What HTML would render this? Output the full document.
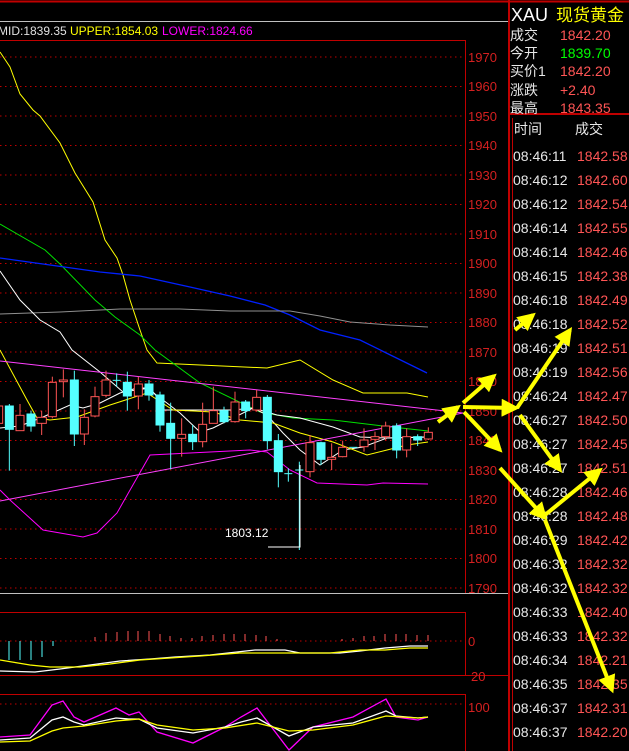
<!DOCTYPE html>
<html><head><meta charset="utf-8"><style>
html,body{margin:0;padding:0;background:#000;width:629px;height:751px;overflow:hidden}
svg{display:block}
text{font-family:"Liberation Sans","Noto Sans CJK SC",sans-serif}
</style></head><body>
<svg width="629" height="751" viewBox="0 0 629 751" xmlns="http://www.w3.org/2000/svg">
<rect width="629" height="751" fill="#000"/>
<line x1="0" y1="1.5" x2="629" y2="1.5" stroke="#c00000" stroke-width="2"/>
<line x1="0" y1="21.5" x2="509" y2="21.5" stroke="#c0c0c0"/>
<text x="-2" y="35" font-size="12" fill="#e0e0e0">MID:1839.35</text>
<text x="70" y="35" font-size="12" fill="#ffff00">UPPER:1854.03</text>
<text x="162" y="35" font-size="12" fill="#ff00ff">LOWER:1824.66</text>
<polyline points="0,40.5 465.5,40.5 465.5,593" fill="none" stroke="#c00000"/>
<line x1="0" y1="593.5" x2="509" y2="593.5" stroke="#c0c0c0"/>
<g stroke="#c00000" stroke-dasharray="1.5,3.5" stroke-width="1">
<line x1="0" y1="57" x2="465" y2="57"/><line x1="0" y1="86.5" x2="465" y2="86.5"/>
<line x1="0" y1="116" x2="465" y2="116"/><line x1="0" y1="145.5" x2="465" y2="145.5"/>
<line x1="0" y1="175" x2="465" y2="175"/><line x1="0" y1="204.5" x2="465" y2="204.5"/>
<line x1="0" y1="234" x2="465" y2="234"/><line x1="0" y1="263.5" x2="465" y2="263.5"/>
<line x1="0" y1="293" x2="465" y2="293"/><line x1="0" y1="322.5" x2="465" y2="322.5"/>
<line x1="0" y1="352" x2="465" y2="352"/><line x1="0" y1="381.5" x2="465" y2="381.5"/>
<line x1="0" y1="411" x2="465" y2="411"/><line x1="0" y1="440.5" x2="465" y2="440.5"/>
<line x1="0" y1="470" x2="465" y2="470"/><line x1="0" y1="499.5" x2="465" y2="499.5"/>
<line x1="0" y1="529" x2="465" y2="529"/><line x1="0" y1="558.5" x2="465" y2="558.5"/>
<line x1="0" y1="588" x2="465" y2="588"/>
</g>
<g font-size="13" fill="#d42020">
<text x="468" y="62">1970</text><text x="468" y="91">1960</text><text x="468" y="121">1950</text>
<text x="468" y="150">1940</text><text x="468" y="180">1930</text><text x="468" y="209">1920</text>
<text x="468" y="239">1910</text><text x="468" y="268">1900</text><text x="468" y="298">1890</text>
<text x="468" y="327">1880</text><text x="468" y="357">1870</text><text x="468" y="386">1860</text>
<text x="468" y="416">1850</text><text x="468" y="445">1840</text><text x="468" y="475">1830</text>
<text x="468" y="504">1820</text><text x="468" y="534">1810</text><text x="468" y="563">1800</text>
<text x="468" y="593">1790</text>
</g>
<g fill="none" stroke-width="1">
<polyline stroke="#ffff00" points="0,52 10,67 20,94 33,110 40,116 60,143 75,173 93,202 105,240 117,258 123,275 130,300 140,330 147,350 157,363 267,368 300,360 333,380 363,393 407,393 428,397"/>
<polyline stroke="#00e000" points="0,224 45,250 60,264 95,300 115,317 140,335 155,350 200,383 260,412 293,418 333,420 383,426 428,431"/>
<polyline stroke="#0020ff" stroke-width="1.3" points="0,258 50,265 100,272 140,276 190,287 230,296 265,305 290,315 320,330 360,340 427,373"/>
<polyline stroke="#909090" points="0,314 60,312 120,309 180,309 230,311 290,311 320,316 350,322 390,325 428,327"/>
<polyline stroke="#ffffff" points="0,271 20,300 40,320 60,332 72,350 100,372 123,392 150,388 157,397 163,410 233,410 253,408 277,415 300,418 333,427 360,437 387,438 428,437"/>
<polyline stroke="#ffffff" points="0,428 20,426 43,417 70,405 83,408 100,403 120,393 137,388 147,388 163,400 180,413 200,432 213,428 233,418 253,408 267,415 283,433 300,450 320,465 343,450 363,447 387,438 428,437"/>
<polyline stroke="#ffff00" points="0,350 27,400 37,418 50,420 77,417 110,405 147,393 173,410 213,412 240,420 273,423 300,433 333,442 367,455 387,450 407,445 428,442"/>
<line stroke="#ff40ff" x1="0" y1="361" x2="463" y2="413"/>
<line stroke="#ff40ff" x1="0" y1="501" x2="463" y2="413"/>
<polyline stroke="#ff00ff" points="0,490 10,500 43,530 83,537 97,533 117,513 150,455 250,450 267,452 290,470 317,483 367,485 383,483 428,484"/>
</g>
<g transform="translate(0,340) scale(0.33333)" stroke-width="3">
<g stroke="#ff5555" fill="#000">
<rect x="-10" y="198" width="18" height="52"/>
<line x1="60" y1="192" x2="60" y2="226"/><rect x="48" y="226" width="24" height="46"/>
<line x1="125" y1="212" x2="125" y2="285"/><rect x="111" y="232" width="28" height="18"/>
<line x1="157" y1="110" x2="157" y2="235"/><rect x="145" y="127" width="24" height="103"/>
<line x1="190" y1="88" x2="190" y2="172"/><rect x="178" y="120" width="24" height="5"/>
<line x1="253" y1="208" x2="253" y2="315"/><rect x="241" y="232" width="24" height="50"/>
<line x1="285" y1="140" x2="285" y2="232"/><rect x="273" y="170" width="24" height="58"/>
<line x1="318" y1="92" x2="318" y2="172"/><rect x="306" y="120" width="24" height="46"/>
<line x1="415" y1="110" x2="415" y2="208"/><rect x="403" y="132" width="24" height="36"/>
<line x1="545" y1="235" x2="545" y2="350"/><rect x="533" y="283" width="24" height="12"/>
<line x1="608" y1="188" x2="608" y2="322"/><rect x="596" y="253" width="24" height="52"/>
<line x1="640" y1="140" x2="640" y2="250"/><rect x="628" y="212" width="24" height="38"/>
<line x1="705" y1="155" x2="705" y2="248"/><rect x="693" y="186" width="24" height="59"/>
<line x1="770" y1="150" x2="770" y2="215"/><rect x="758" y="172" width="24" height="38"/>
<line x1="930" y1="285" x2="930" y2="412"/><rect x="918" y="308" width="24" height="87"/>
<line x1="995" y1="310" x2="995" y2="390"/><rect x="983" y="352" width="24" height="6"/>
<line x1="1028" y1="302" x2="1028" y2="352"/><rect x="1016" y="322" width="24" height="28"/>
<line x1="1092" y1="265" x2="1092" y2="335"/><rect x="1080" y="300" width="24" height="20"/>
<line x1="1125" y1="275" x2="1125" y2="330"/><rect x="1113" y="290" width="24" height="8"/>
<line x1="1157" y1="245" x2="1157" y2="300"/><rect x="1145" y="258" width="24" height="32"/>
<line x1="1220" y1="265" x2="1220" y2="352"/><rect x="1208" y="290" width="24" height="40"/>
<line x1="1285" y1="262" x2="1285" y2="300"/><rect x="1273" y="277" width="24" height="20"/>
</g>
<g stroke="#55ffff" fill="#55ffff">
<line x1="28" y1="192" x2="28" y2="392"/><rect x="16" y="198" width="24" height="70"/>
<line x1="93" y1="212" x2="93" y2="275"/><rect x="81" y="222" width="24" height="36"/>
<line x1="223" y1="92" x2="223" y2="318"/><rect x="211" y="120" width="24" height="162"/>
<line x1="350" y1="100" x2="350" y2="140"/><line x1="338" y1="121" x2="362" y2="121"/>
<line x1="382" y1="95" x2="382" y2="212"/><rect x="370" y="127" width="24" height="41"/>
<line x1="447" y1="120" x2="447" y2="182"/><rect x="435" y="132" width="24" height="33"/>
<line x1="480" y1="155" x2="480" y2="275"/><rect x="468" y="165" width="24" height="90"/>
<line x1="512" y1="188" x2="512" y2="388"/><rect x="500" y="250" width="24" height="45"/>
<line x1="578" y1="255" x2="578" y2="330"/><rect x="566" y="283" width="24" height="22"/>
<line x1="672" y1="200" x2="672" y2="250"/><rect x="660" y="212" width="24" height="33"/>
<line x1="737" y1="180" x2="737" y2="235"/><rect x="725" y="186" width="24" height="26"/>
<line x1="802" y1="165" x2="802" y2="328"/><rect x="790" y="172" width="24" height="130"/>
<line x1="835" y1="282" x2="835" y2="442"/><rect x="823" y="302" width="24" height="93"/>
<line x1="865" y1="385" x2="865" y2="425"/><line x1="853" y1="401" x2="877" y2="401"/>
<line x1="898" y1="365" x2="898" y2="630"/><line x1="886" y1="390" x2="910" y2="390"/>
<line x1="963" y1="305" x2="963" y2="375"/><rect x="951" y="308" width="24" height="50"/>
<line x1="1048" y1="322" x2="1072" y2="322"/>
<line x1="1190" y1="250" x2="1190" y2="355"/><rect x="1178" y="258" width="24" height="72"/>
<line x1="1253" y1="283" x2="1253" y2="318"/><rect x="1241" y="290" width="24" height="10"/>
</g>
</g>
<polyline points="268,547 300,547 300,465" fill="none" stroke="#ffffff"/>
<text x="225" y="537" font-size="12" fill="#ffffff">1803.12</text>
<polyline points="0,612.5 465.5,612.5 465.5,675" fill="none" stroke="#c00000"/>
<line x1="0" y1="675.5" x2="509" y2="675.5" stroke="#c00000"/>
<line x1="0" y1="641" x2="465" y2="641" stroke="#c00000" stroke-dasharray="1.5,3.5"/>
<text x="468" y="646" font-size="13" fill="#d42020">0</text>
<text x="471" y="681" font-size="13" fill="#d42020">20</text>
<g stroke="#55ffff"><line x1="9" y1="641" x2="9" y2="660"/><line x1="20" y1="641" x2="20" y2="660"/><line x1="31" y1="641" x2="31" y2="660"/><line x1="42" y1="641" x2="42" y2="657"/><line x1="53" y1="641" x2="53" y2="646"/></g>
<g stroke="#ff5555">
<line x1="95" y1="641" x2="95" y2="637"/><line x1="106" y1="641" x2="106" y2="633"/><line x1="117" y1="641" x2="117" y2="632"/><line x1="128" y1="641" x2="128" y2="631"/><line x1="138" y1="641" x2="138" y2="631"/><line x1="149" y1="641" x2="149" y2="631"/><line x1="160" y1="641" x2="160" y2="634"/><line x1="170" y1="641" x2="170" y2="636"/><line x1="181" y1="641" x2="181" y2="638"/><line x1="192" y1="641" x2="192" y2="638"/><line x1="202" y1="641" x2="202" y2="636"/><line x1="213" y1="641" x2="213" y2="635"/><line x1="224" y1="641" x2="224" y2="634"/><line x1="234" y1="641" x2="234" y2="634"/><line x1="245" y1="641" x2="245" y2="634"/><line x1="256" y1="641" x2="256" y2="635"/><line x1="266" y1="641" x2="266" y2="636"/><line x1="277" y1="641" x2="277" y2="639"/><line x1="342" y1="641" x2="342" y2="639"/><line x1="353" y1="641" x2="353" y2="638"/><line x1="364" y1="641" x2="364" y2="636"/><line x1="374" y1="641" x2="374" y2="636"/><line x1="385" y1="641" x2="385" y2="634"/><line x1="396" y1="641" x2="396" y2="634"/><line x1="406" y1="641" x2="406" y2="634"/><line x1="417" y1="641" x2="417" y2="635"/><line x1="428" y1="641" x2="428" y2="635"/>
</g>
<polyline fill="none" stroke="#ffffff" stroke-width="1.3" points="0,671 35,672 60,669 90,665 120,661 150,659 175,657 210,655 255,650 285,650 300,653 340,653 360,651 385,648 410,646 428,646"/>
<polyline fill="none" stroke="#ffff00" stroke-width="1.3" points="0,660 30,665 50,667 80,667 110,664 140,660 170,658 200,656 240,653 285,653 330,653 360,650 385,650 410,648 428,648"/>
<polyline points="0,694.5 465.5,694.5 465.5,751" fill="none" stroke="#c00000"/>
<line x1="0" y1="704" x2="465" y2="704" stroke="#c00000" stroke-dasharray="1.5,3.5"/>
<text x="468" y="712" font-size="13" fill="#d42020">100</text>
<polyline fill="none" stroke="#ff00ff" stroke-width="1.3" points="0,737 30,735 52,705 63,701 74,717 84,722 116,708 129,715 139,712 157,732 193,743 225,727 241,717 257,708 289,750 313,727 353,717 386,699 396,717 418,720 428,717"/>
<polyline fill="none" stroke="#ffffff" stroke-width="1.3" points="0,740 30,738 52,720 63,717 74,722 84,725 116,718 129,719 139,719 157,728 193,733 225,727 241,722 257,718 289,736 313,727 353,723 386,711 396,716 418,718 428,717"/>
<polyline fill="none" stroke="#ffff00" stroke-width="1.3" points="0,742 30,741 52,731 63,728 84,726 116,721 139,719 157,725 193,730 225,728 257,723 289,731 313,730 353,725 386,716 418,718 428,717"/>
<line x1="509" y1="0" x2="509" y2="751" stroke="#c00000" stroke-width="2"/>
<line x1="512.5" y1="118" x2="512.5" y2="751" stroke="#c00000"/>
<line x1="509" y1="114" x2="629" y2="114" stroke="#c00000" stroke-width="2"/>
<text x="511" y="21" font-size="18" fill="#ffffff">XAU</text>
<text x="556" y="21" font-size="17" fill="#ffff00">现货黄金</text>
<g font-size="14" fill="#e8e8e8">
<text x="510" y="40">成交</text><text x="510" y="58">今开</text><text x="510" y="76">买价1</text><text x="510" y="95">涨跌</text><text x="510" y="113">最高</text>
<text x="514" y="134">时间</text><text x="575" y="134">成交</text>
</g>
<g font-size="14">
<text x="560" y="40" fill="#ff5555">1842.20</text>
<text x="560" y="58" fill="#00ff00">1839.70</text>
<text x="560" y="76" fill="#ff5555">1842.20</text>
<text x="560" y="95" fill="#ff5555">+2.40</text>
<text x="560" y="113" fill="#ff5555">1843.35</text>
</g>
<g font-size="14" fill="#e8e8e8">
<text x="513" y="161">08:46:11</text><text x="513" y="185">08:46:12</text><text x="513" y="209">08:46:12</text><text x="513" y="233">08:46:14</text><text x="513" y="257">08:46:14</text><text x="513" y="281">08:46:15</text><text x="513" y="305">08:46:18</text><text x="513" y="329">08:46:18</text><text x="513" y="353">08:46:19</text><text x="513" y="377">08:46:19</text><text x="513" y="401">08:46:24</text><text x="513" y="425">08:46:27</text><text x="513" y="449">08:46:27</text><text x="513" y="473">08:46:27</text><text x="513" y="497">08:46:28</text><text x="513" y="521">08:46:28</text><text x="513" y="545">08:46:29</text><text x="513" y="569">08:46:32</text><text x="513" y="593">08:46:32</text><text x="513" y="617">08:46:33</text><text x="513" y="641">08:46:33</text><text x="513" y="665">08:46:34</text><text x="513" y="689">08:46:35</text><text x="513" y="713">08:46:37</text><text x="513" y="737">08:46:37</text>
</g>
<g font-size="14" fill="#ff5555">
<text x="577" y="161">1842.58</text><text x="577" y="185">1842.60</text><text x="577" y="209">1842.54</text><text x="577" y="233">1842.55</text><text x="577" y="257">1842.46</text><text x="577" y="281">1842.38</text><text x="577" y="305">1842.49</text><text x="577" y="329">1842.52</text><text x="577" y="353">1842.51</text><text x="577" y="377">1842.56</text><text x="577" y="401">1842.47</text><text x="577" y="425">1842.50</text><text x="577" y="449">1842.45</text><text x="577" y="473">1842.51</text><text x="577" y="497">1842.46</text><text x="577" y="521">1842.48</text><text x="577" y="545">1842.42</text><text x="577" y="569">1842.32</text><text x="577" y="593">1842.32</text><text x="577" y="617">1842.40</text><text x="577" y="641">1842.32</text><text x="577" y="665">1842.21</text><text x="577" y="689">1842.35</text><text x="577" y="713">1842.31</text><text x="577" y="737">1842.20</text>
</g>
<defs><marker id="ah" viewBox="0 0 10 10" refX="8" refY="5" markerWidth="4.5" markerHeight="4.5" orient="auto"><path d="M0,0 L10,5 L0,10 z" fill="#ffff00"/></marker></defs>
<g stroke="#ffff00" stroke-width="4" fill="none" marker-end="url(#ah)">
<line x1="438" y1="422" x2="458" y2="407"/>
<line x1="463" y1="403" x2="494" y2="376"/>
<line x1="463" y1="407" x2="516" y2="408"/>
<line x1="464" y1="412" x2="500" y2="450"/>
<line x1="517" y1="408" x2="570" y2="330"/>
<line x1="515" y1="330" x2="533" y2="315"/>
<line x1="520" y1="415" x2="560" y2="470"/>
<line x1="500" y1="468" x2="545" y2="518"/>
<line x1="545" y1="515" x2="600" y2="470"/>
<line x1="545" y1="520" x2="612" y2="690"/>
</g>
</svg>
</body></html>
